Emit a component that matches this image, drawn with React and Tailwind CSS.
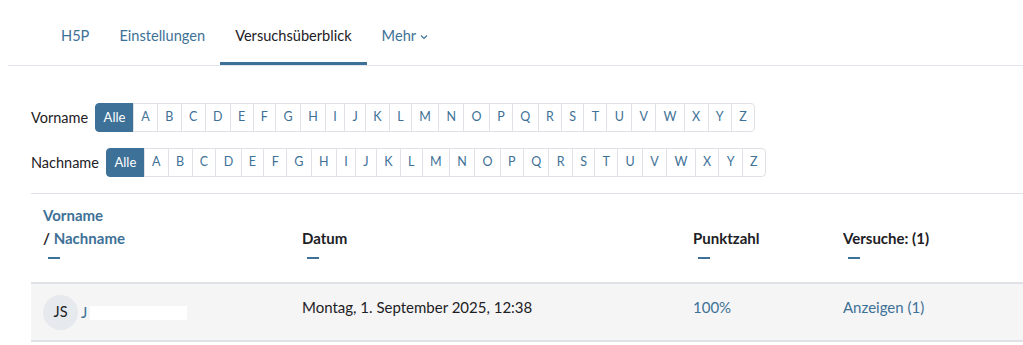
import React from "react";

const letters = "ABCDEFGHIJKLMNOPQRSTUVWXYZ".split("");

const InitialBar = ({ label }) => (
  <div className="flex items-center">
    <span className="mr-[7px] text-[14.5px] text-[#1d2125]">{label}</span>
    <ul className="flex">
      <li className="h-[29px] px-[7.5px] flex items-center rounded-l-[4px] bg-[#3e7197] border border-[#3e7197] text-white text-[13px]">
        Alle
      </li>
      {letters.map((l, i) => (
        <li
          key={l}
          className={
            "h-[29px] px-[7.3px] flex items-center -ml-px border border-[#dee2e6] bg-white text-[12.5px] text-[#3e7197] " +
            (i === letters.length - 1 ? "rounded-r-[4px]" : "")
          }
        >
          {l}
        </li>
      ))}
    </ul>
  </div>
);

const Dash = () => <div className="mt-[8px] ml-[5px] w-[12px] h-[2px] bg-[#3e7197] mb-[23px]"></div>;

export default function App() {
  return (
    <div className="w-[1023px] h-[345px] bg-white overflow-hidden" style={{ fontFamily: "Lato, 'Liberation Sans', sans-serif" }}>
      {/* Tabs */}
      <nav className="ml-[8px] pt-[6px] border-b border-[#e3e4ec] flex pl-[38px] text-[14.6px]">
        <a className="h-[59px] px-[15px] flex items-center text-[#3e7197]">H5P</a>
        <a className="h-[59px] px-[15px] flex items-center text-[#3e7197]">Einstellungen</a>
        <a className="h-[59px] px-[15px] flex items-center text-[#1d2125] border-b-[3px] border-[#3e7197] -mb-px pt-[3px]">Versuchsüberblick</a>
        <a className="h-[59px] px-[15px] flex items-center text-[#3e7197]">
          Mehr
          <svg className="ml-1 mt-[2px]" width="8" height="6" viewBox="0 0 8 6" fill="none" stroke="#3e7197" strokeWidth="1.2">
            <path d="M1 1.5l3 3 3-3" />
          </svg>
        </a>
      </nav>

      <div className="pl-[31px] pt-[37px]">
        <div className="flex flex-col gap-4">
          <InitialBar label="Vorname" />
          <InitialBar label="Nachname" />
        </div>

        <table className="mt-4 w-[992px] border-t border-[#dee2e6] text-[15px] leading-[22.5px] text-[#1d2125]">
          <thead>
            <tr className="border-b-2 border-[#dee2e6]">
              <th className="align-bottom text-left font-bold px-3 pt-[10px] pb-0 w-[259px]">
                <div className="text-[#3e7197]">Vorname</div>
                <div>
                  / <span className="text-[#3e7197]">Nachname</span>
                </div>
                <Dash />
              </th>
              <th className="align-bottom text-left font-bold px-3 pt-[10px] pb-0 w-[391px]">
                <div>Datum</div>
                <Dash />
              </th>
              <th className="align-bottom text-left font-bold px-3 pt-[10px] pb-0 w-[150px]">
                <div>Punktzahl</div>
                <Dash />
              </th>
              <th className="align-bottom text-left font-bold px-3 pt-[10px] pb-0">
                <div>Versuche: (1)</div>
                <Dash />
              </th>
            </tr>
          </thead>
          <tbody>
            <tr className="bg-[#f5f5f5] border-b-2 border-[#dee2e6]">
              <td className="align-top px-3 pt-[12px] pb-[10px]">
                <div className="flex items-center -mt-px">
                  <span className="w-[35px] h-[35px] rounded-full bg-[#e6e9ed] flex items-center justify-center text-[14.5px] font-normal text-[#1d2125] mr-[3px]">
                    JS
                  </span>
                  <span className="text-[#3e7197]">J</span>
                  <span className="ml-[3px] w-[97px] h-[14px] bg-white"></span>
                </div>
              </td>
              <td className="align-top px-3 pt-[12px] pb-[10px]">Montag, 1. September 2025, 12:38</td>
              <td className="align-top px-3 pt-[12px] pb-[10px] text-[#3e7197]">100%</td>
              <td className="align-top px-3 pt-[12px] pb-[10px] text-[#3e7197]">Anzeigen (1)</td>
            </tr>
          </tbody>
        </table>
      </div>
    </div>
  );
}
